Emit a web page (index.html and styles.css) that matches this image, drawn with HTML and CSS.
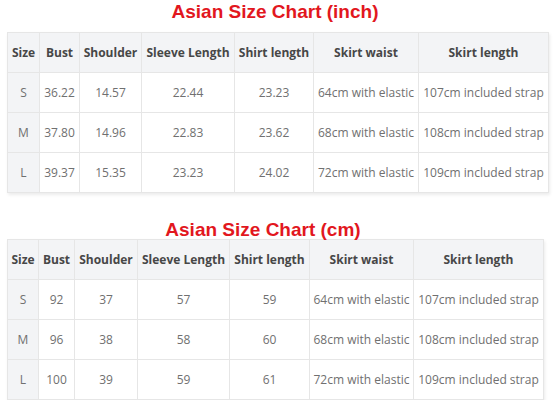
FILE: index.html
```html
<!DOCTYPE html>
<html>
<head>
<meta charset="utf-8">
<link rel="stylesheet" href="styles.css">
</head>
<body>
<div class="page">
  <h2 class="title title-inch">Asian Size Chart (inch)</h2>
  <table class="chart chart-inch">
    <colgroup>
      <col class="c-size"><col class="c-bust"><col class="c-shoulder"><col class="c-sleeve"><col class="c-shirt"><col class="c-waist"><col class="c-skirt">
    </colgroup>
    <thead>
      <tr><th>Size</th><th>Bust</th><th>Shoulder</th><th>Sleeve Length</th><th>Shirt length</th><th>Skirt waist</th><th>Skirt length</th></tr>
    </thead>
    <tbody>
      <tr><td class="sz">S</td><td>36.22</td><td>14.57</td><td>22.44</td><td>23.23</td><td>64cm with elastic</td><td>107cm included strap</td></tr>
      <tr><td class="sz">M</td><td>37.80</td><td>14.96</td><td>22.83</td><td>23.62</td><td>68cm with elastic</td><td>108cm included strap</td></tr>
      <tr><td class="sz">L</td><td>39.37</td><td>15.35</td><td>23.23</td><td>24.02</td><td>72cm with elastic</td><td>109cm included strap</td></tr>
    </tbody>
  </table>

  <h2 class="title title-cm">Asian Size Chart (cm)</h2>
  <table class="chart chart-cm">
    <colgroup>
      <col class="c-size"><col class="c-bust"><col class="c-shoulder"><col class="c-sleeve"><col class="c-shirt"><col class="c-waist"><col class="c-skirt">
    </colgroup>
    <thead>
      <tr><th>Size</th><th>Bust</th><th>Shoulder</th><th>Sleeve Length</th><th>Shirt length</th><th>Skirt waist</th><th>Skirt length</th></tr>
    </thead>
    <tbody>
      <tr><td class="sz">S</td><td>92</td><td>37</td><td>57</td><td>59</td><td>64cm with elastic</td><td>107cm included strap</td></tr>
      <tr><td class="sz">M</td><td>96</td><td>38</td><td>58</td><td>60</td><td>68cm with elastic</td><td>108cm included strap</td></tr>
      <tr><td class="sz">L</td><td>100</td><td>39</td><td>59</td><td>61</td><td>72cm with elastic</td><td>109cm included strap</td></tr>
    </tbody>
  </table>
</div>
</body>
</html>
```

FILE: styles.css
```css
html, body {
  margin: 0;
  padding: 0;
  background: #ffffff;
}

.page {
  width: 554px;
  padding-left: 7px;
  box-sizing: border-box;
}

.title {
  margin: 0;
  font-family: "Liberation Sans", Arial, sans-serif;
  font-weight: 700;
  font-size: 19px;
  line-height: 22px;
  color: #e2171e;
  text-align: center;
}

.title-inch {
  margin-top: 1px;
  margin-bottom: 9px;
  padding-right: 11px;
}

.title-cm {
  margin-top: 26px;
  margin-bottom: -2px;
  padding-right: 35px;
  position: relative;
}

.chart {
  border-collapse: collapse;
  table-layout: fixed;
  font-family: "Open Sans", "Noto Sans", sans-serif;
  font-size: 12px;
  color: #707070;
  box-shadow: 1px 2px 3px rgba(0, 0, 0, 0.08);
}

.chart th,
.chart td {
  border: 1px solid #e6e6e6;
  height: 39px;
  padding: 0;
  text-align: center;
  vertical-align: middle;
  white-space: nowrap;
}

.chart th {
  background: #f3f4f6;
  color: #474747;
  font-weight: 700;
}

.chart td.sz {
  background: #f3f4f6;
}

.chart-inch { width: 541px; }
.chart-inch .c-size { width: 32px; }
.chart-inch .c-bust { width: 40px; }
.chart-inch .c-shoulder { width: 62px; }
.chart-inch .c-sleeve { width: 93px; }
.chart-inch .c-shirt { width: 79px; }
.chart-inch .c-waist { width: 105px; }
.chart-inch .c-skirt { width: 130px; }

.chart-cm { width: 536px; }
.chart-cm .c-size { width: 31px; }
.chart-cm .c-bust { width: 36px; }
.chart-cm .c-shoulder { width: 63px; }
.chart-cm .c-sleeve { width: 92px; }
.chart-cm .c-shirt { width: 80px; }
.chart-cm .c-waist { width: 104px; }
.chart-cm .c-skirt { width: 130px; }
```
